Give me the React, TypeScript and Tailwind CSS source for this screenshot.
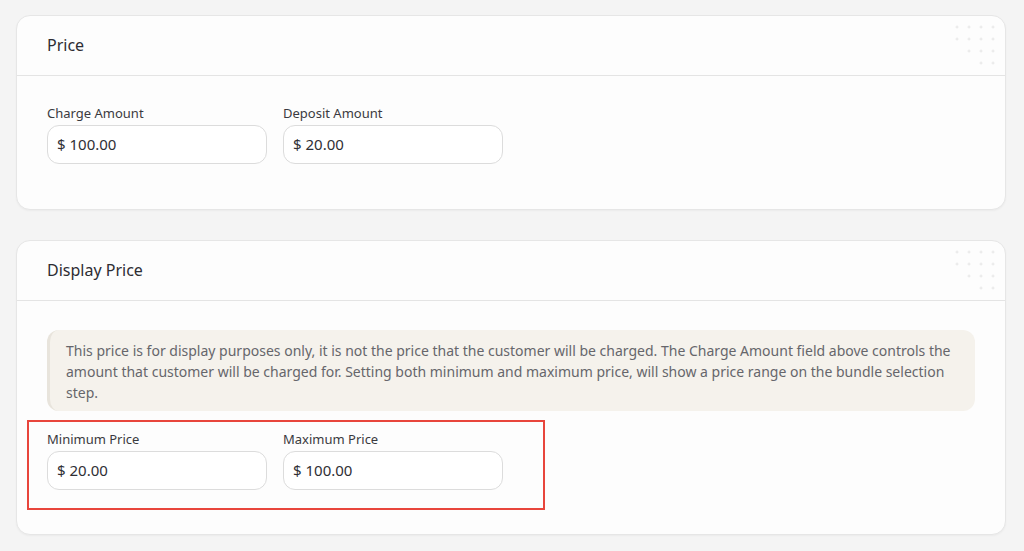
import React from "react";

const font = { fontFamily: '"Noto Sans", "Open Sans", sans-serif' };

function Dots() {
  // small plus marks in the top right corner of each card
  const rows = [
    [0, 1, 2, 3],
    [0, 1, 2, 3],
    [1, 2, 3],
    [2, 3],
  ];
  return (
    <svg className="absolute right-[8px] top-[7px]" width="44" height="44" viewBox="0 0 44 44">
      {rows.map((cols, r) =>
        cols.map((c) => (
          <g key={`${r}-${c}`} stroke="#e2e2e2" strokeWidth="0.8">
            <line x1={c * 12 + 2.5} y1={r * 12 + 4} x2={c * 12 + 5.5} y2={r * 12 + 4} />
            <line x1={c * 12 + 4} y1={r * 12 + 2.5} x2={c * 12 + 4} y2={r * 12 + 5.5} />
          </g>
        ))
      )}
    </svg>
  );
}

function Field({ label, value }: { label: string; value: string }) {
  return (
    <div className="w-[220px]">
      <div className="text-[13px] leading-[18px] text-[#3a3a40] mb-[3px]">{label}</div>
      <div className="h-[39px] rounded-[12px] border border-[#dcdcdc] bg-white flex items-center px-[9px] text-[15px] text-[#2f2f35]">
        {value}
      </div>
    </div>
  );
}

function Card({ title, children }: { title: string; children: React.ReactNode }) {
  return (
    <div className="relative rounded-[14px] border border-[#e6e6e6] bg-[#fdfdfd] shadow-[0_1px_2px_rgba(0,0,0,0.04)]">
      <Dots />
      <div className="h-[60px] flex items-center px-[30px] border-b border-[#e4e4e4]">
        <h2 className="text-[16px] text-[#2d2d33] -mt-[1px]">{title}</h2>
      </div>
      {children}
    </div>
  );
}

export default function App() {
  return (
    <div className="h-[551px] w-[1024px] bg-[#f4f4f4] overflow-hidden" style={font}>
      <div className="pl-[16px] pr-[18px] pt-[15px] flex flex-col gap-[30px]">
        {/* Price */}
        <Card title="Price">
          <div className="px-[30px] pt-[28px] pb-[45px] flex gap-[16px]">
            <Field label="Charge Amount" value="$ 100.00" />
            <Field label="Deposit Amount" value="$ 20.00" />
          </div>
        </Card>

        {/* Display Price */}
        <Card title="Display Price">
          <div className="px-[30px] pt-[29px] pb-[44px]">
            <div className="rounded-[12px] bg-[#f5f2ec] border-l-[3px] border-[#e8e4dc] pl-[16px] pr-[12px] pt-[10px] pb-[8px] text-[14px] leading-[21px] text-[#66666b]">
              This price is for display purposes only, it is not the price that the customer will be charged. The Charge
              Amount field above controls the amount that customer will be charged for. Setting both minimum and maximum
              price, will show a price range on the bundle selection step.
            </div>
            <div className="relative mt-[19px] flex gap-[16px]">
              <Field label="Minimum Price" value="$ 20.00" />
              <Field label="Maximum Price" value="$ 100.00" />
              {/* highlight annotation */}
              <div className="absolute left-[-20px] top-[-10px] w-[518px] h-[90px] border-2 border-[#e8453c] pointer-events-none" />
            </div>
          </div>
        </Card>
      </div>
    </div>
  );
}
